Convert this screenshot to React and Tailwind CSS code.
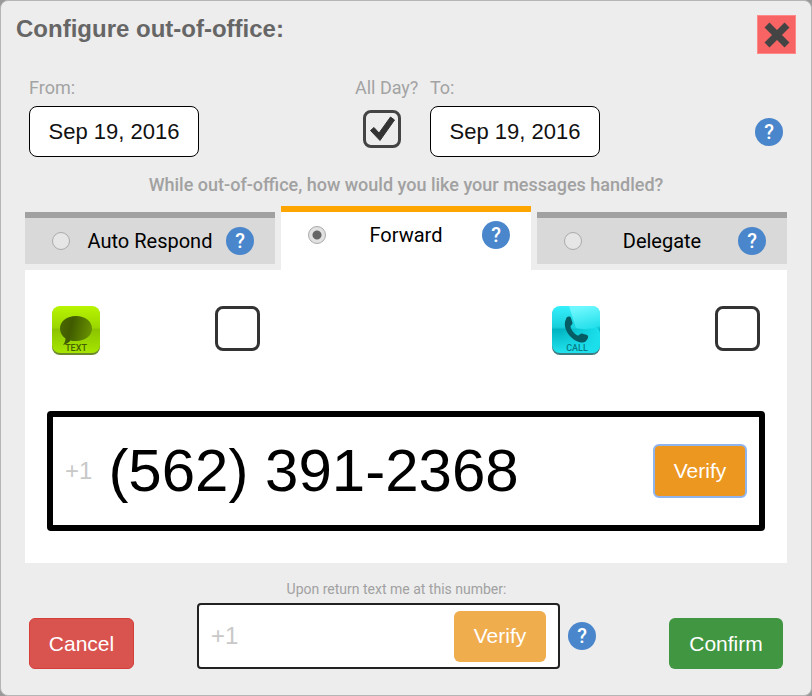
import { useState } from "react";

function HelpButton({ label }) {
  return (
    <button
      type="button"
      aria-label={label}
      className="w-7 h-7 shrink-0 rounded-full bg-[#4a86cb] text-white text-xl leading-7 font-medium text-center cursor-pointer"
    >
      ?
    </button>
  );
}

function DateField({ id, value, onChange }) {
  return (
    <input
      id={id}
      type="text"
      value={value}
      onChange={(e) => onChange(e.target.value)}
      className="w-[170px] h-[51px] rounded-lg border border-black bg-white text-center text-[22px] text-[#111] font-['Liberation_Sans',Arial,sans-serif]"
    />
  );
}

function CheckMark() {
  return (
    <svg viewBox="0 0 38 38" className="col-start-1 row-start-1 w-[38px] h-[38px] pointer-events-none">
      <path
        d="M7.500 20.500 L11 17.500 L16 23 L27.500 7 L31.500 10 L17 30.500 Z"
        fill="#333"
        stroke="#333"
        strokeWidth="1"
        strokeLinejoin="round"
      />
    </svg>
  );
}

function TextIcon() {
  return (
    <svg viewBox="0 0 48 49" className="w-12 h-[49px]" role="img" aria-label="Text">
      <defs>
        <linearGradient id="lime" x1="0" y1="0" x2="0" y2="1">
          <stop offset="0" stopColor="#b8f500" />
          <stop offset="0.46" stopColor="#9bd600" />
          <stop offset="0.5" stopColor="#8cc400" />
          <stop offset="1" stopColor="#a6e600" />
        </linearGradient>
        <linearGradient id="bubble" x1="0" y1="0" x2="1" y2="0.2">
          <stop offset="0" stopColor="#4b6a00" />
          <stop offset="0.4" stopColor="#405b00" />
          <stop offset="1" stopColor="#668e00" />
        </linearGradient>
      </defs>
      <rect x="0" y="1" width="48" height="48" rx="8" fill="#6c8a2c" />
      <rect x="0" y="0" width="48" height="47" rx="8" fill="url(#lime)" />
      <path
        d="M24 10 C33 10 40 15 40 22.500 C40 30 33 35 24 35 C22 35 20 35 18.500 34.500 C17 36.500 14 38.500 11 39 C12.500 37 13.500 35 13.500 32.500 C10 30 8 26.500 8 22.500 C8 15 15 10 24 10 Z"
        fill="url(#bubble)"
      />
      <text x="24" y="45" textAnchor="middle" fontSize="9" fontWeight="500" fill="#456000" fontFamily="Roboto, sans-serif">
        TEXT
      </text>
    </svg>
  );
}

function CallIcon() {
  return (
    <svg viewBox="0 0 48 49" className="w-12 h-[49px]" role="img" aria-label="Call">
      <defs>
        <linearGradient id="cyan" x1="0" y1="0" x2="0" y2="1">
          <stop offset="0" stopColor="#35f0fb" />
          <stop offset="0.45" stopColor="#18cfda" />
          <stop offset="0.5" stopColor="#00b4c1" />
          <stop offset="1" stopColor="#22e3ee" />
        </linearGradient>
        <linearGradient id="shine" x1="0.6" y1="0" x2="1" y2="1">
          <stop offset="0" stopColor="#7afaff" />
          <stop offset="1" stopColor="#1be0ec" />
        </linearGradient>
        <linearGradient id="floor" x1="0" y1="0" x2="1" y2="0">
          <stop offset="0.2" stopColor="#1be0ec" stopOpacity="0" />
          <stop offset="1" stopColor="#1be0ec" />
        </linearGradient>
      </defs>
      <rect x="0" y="1" width="48" height="48" rx="8" fill="#3f7c82" />
      <rect x="0" y="0" width="48" height="47" rx="8" fill="url(#cyan)" />
      <rect x="0" y="20" width="48" height="27" rx="8" fill="url(#floor)" />
      <path d="M17 0 H40 Q48 0 48 8 V20 Q36 25 24 22 Z" fill="url(#shine)" opacity="0.8" />
      <path
        d="M14 13 C15 10 18 10 19 12 L20.500 17 C20.500 18.500 18.500 19.500 18.500 20.500 C19 24 22 27.500 25.500 29.500 C27 30 28 27.500 30 27.500 L35 29 C37 30 36 33 34 35 C31 38 25 36.500 20 32 C14 27 11 19 14 13 Z"
        fill="#065c64"
      />
      <text x="25" y="45" textAnchor="middle" fontSize="9" fontWeight="500" fill="#067c86" fontFamily="Roboto, sans-serif">
        CALL
      </text>
    </svg>
  );
}

function Tab({ name, active, onSelect }) {
  return (
    <div
      className={
        active
          ? "flex-1 h-16 border-t-6 border-[#ffa500] bg-white"
          : "flex-1 h-[52px] border-t-6 border-[#a1a1a1] bg-[#d9d9d9]"
      }
    >
      <div className="flex items-center h-[46px] pl-[27px] pr-[21px]">
        <label className="flex-1 flex items-center text-xl text-black cursor-pointer">
          <input
            type="radio"
            name="handling"
            checked={active}
            onChange={onSelect}
            className="appearance-none w-[18px] h-[18px] shrink-0 rounded-full border border-[#aaa] bg-[#e6e6e6] checked:bg-[radial-gradient(circle,#666_0_4px,#e2e2e2_5px)]"
          />
          <span className="flex-1 pl-1 text-center whitespace-nowrap">{name}</span>
        </label>
        <HelpButton label={`Help about ${name}`} />
      </div>
    </div>
  );
}

function Channel({ icon, label }) {
  return (
    <div className="flex w-[208px] justify-between">
      {icon}
      <input
        type="checkbox"
        aria-label={label}
        className="appearance-none w-[45px] h-[45px] rounded-lg border-3 border-[#333] bg-white checked:bg-[#333]"
      />
    </div>
  );
}

export default function App() {
  const [from, setFrom] = useState("Sep 19, 2016");
  const [to, setTo] = useState("Sep 19, 2016");
  const [allDay, setAllDay] = useState(true);
  const [tab, setTab] = useState("Forward");
  const [phone, setPhone] = useState("(562) 391-2368");
  const [returnPhone, setReturnPhone] = useState("");

  const tabs = ["Auto Respond", "Forward", "Delegate"];

  return (
    <div className="min-h-screen bg-[#999] font-[Roboto,sans-serif]">
      <form className="min-h-screen rounded-lg border border-[#b5b5b5] bg-[#ededed]" onSubmit={(e) => e.preventDefault()}>
        <header className="flex items-start justify-between px-[15px] pt-3.5">
          <h1 className="text-2xl leading-7 font-bold text-[#666] font-['Liberation_Sans',Arial,sans-serif]">
            Configure out-of-office:
          </h1>
          <button
            type="button"
            aria-label="Close"
            className="w-[39px] h-[39px] border border-[#f88] bg-[#f86464] flex items-center justify-center"
          >
            <svg viewBox="0 0 28 28" className="w-7 h-7">
              <path d="M4 4 L24 24 M24 4 L4 24" stroke="#444" strokeWidth="7" />
            </svg>
          </button>
        </header>

        <div className="flex items-end px-7 pt-5">
          <div className="flex-12">
            <label htmlFor="from" className="block mb-1 text-lg leading-7 text-[#a3a3a3]">From:</label>
            <DateField id="from" value={from} onChange={setFrom} />
          </div>
          <div className="w-[75px]">
            <label htmlFor="allday" className="block mb-1 text-lg leading-7 text-[#a3a3a3] whitespace-nowrap">All Day?</label>
            <div className="grid h-[51px] pt-1 pl-2 content-start">
              <input
                id="allday"
                type="checkbox"
                checked={allDay}
                onChange={(e) => setAllDay(e.target.checked)}
                className="col-start-1 row-start-1 appearance-none w-[38px] h-[38px] rounded-lg border-3 border-[#444]"
              />
              {allDay && <CheckMark />}
            </div>
          </div>
          <div className="flex-13">
            <label htmlFor="to" className="block mb-1 text-lg leading-7 text-[#a3a3a3]">To:</label>
            <div className="flex items-center justify-between">
              <DateField id="to" value={to} onChange={setTo} />
              <HelpButton label="Help about dates" />
            </div>
          </div>
        </div>

        <fieldset className="min-w-0 px-6">
          <legend className="w-full h-[49px] pt-3.5 text-center text-lg leading-7 text-[#a1a1a1] font-medium">
            While out-of-office, how would you like your messages handled?
          </legend>
          <div className="flex gap-1.5 h-16 items-center">
            {tabs.map((name) => (
              <Tab key={name} name={name} active={tab === name} onSelect={() => setTab(name)} />
            ))}
          </div>

          <section className="bg-white pt-9 pb-8 px-[22px]">
            <div className="flex justify-between px-[5px]">
              <Channel icon={<TextIcon />} label="Forward texts" />
              <Channel icon={<CallIcon />} label="Forward calls" />
            </div>
            <div className="mt-14 flex items-center h-[120px] border-6 border-black rounded-sm px-3">
              <label htmlFor="phone" className="text-2xl text-[#c8c8c8] font-['Liberation_Sans',Arial,sans-serif]">+1</label>
              <input
                id="phone"
                type="tel"
                value={phone}
                onChange={(e) => setPhone(e.target.value)}
                className="flex-1 min-w-0 pl-4 text-[60px] leading-[72px] text-black font-['Liberation_Sans',Arial,sans-serif]"
              />
              <button
                type="button"
                className="w-[94px] h-[54px] rounded-md border-2 border-[#8fb4ee] bg-[#ec971f] text-[21px] text-white font-['Liberation_Sans',Arial,sans-serif]"
              >
                Verify
              </button>
            </div>
          </section>
        </fieldset>

        <footer className="flex items-end justify-between px-7 pt-3 pb-6 font-['Liberation_Sans',Arial,sans-serif]">
          <button type="button" className="w-[105px] h-[51px] rounded-md border border-[#d43f3a] bg-[#d9534f] text-[21px] text-white">
            Cancel
          </button>
          <div className="pr-2.5">
            <label htmlFor="return-phone" className="block text-center text-sm leading-7 text-[#a1a1a1] font-[Roboto,sans-serif]">
              Upon return text me at this number:
            </label>
            <div className="flex items-center gap-2">
              <div className="flex items-center w-[363px] h-[66px] rounded-sm border-2 border-[#222] bg-white px-3">
                <input
                  id="return-phone"
                  type="tel"
                  placeholder="+1"
                  value={returnPhone}
                  onChange={(e) => setReturnPhone(e.target.value)}
                  className="flex-1 min-w-0 text-2xl placeholder:text-[#c8c8c8]"
                />
                <button type="button" className="w-[92px] h-[51px] rounded-md bg-[#f0ad4e] text-[21px] text-white">
                  Verify
                </button>
              </div>
              <div className="flex font-[Roboto,sans-serif]">
                <HelpButton label="Help about the return number" />
              </div>
            </div>
          </div>
          <button type="submit" className="w-[114px] h-[51px] rounded-md bg-[#419641] text-[21px] text-white">
            Confirm
          </button>
        </footer>
      </form>
    </div>
  );
}
